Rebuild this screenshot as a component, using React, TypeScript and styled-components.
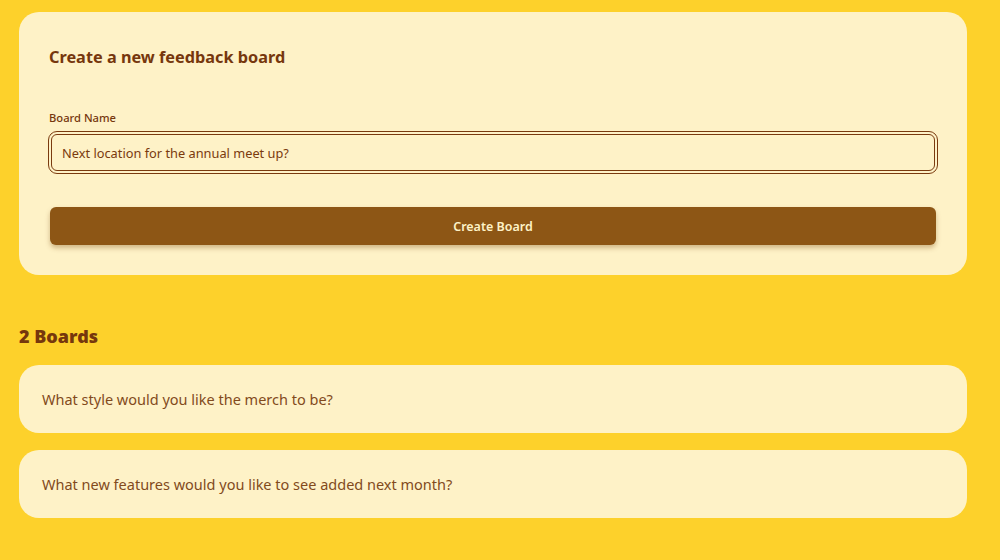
import React, { useState } from 'react'
import styled, { createGlobalStyle } from 'styled-components'

const GlobalStyle = createGlobalStyle`
  body {
    margin: 0;
    background: #FDD12B;
    font-family: "Noto Sans", "Open Sans", sans-serif;
    color: #7A3A0E;
  }
`

const Page = styled.div`
  width: 948px;
  padding: 12px 0 40px 19px;
`

const CreateCard = styled.form`
  background: #FEF2C7;
  border-radius: 20px;
  padding: 30px;
  display: flex;
  flex-direction: column;
`

const Title = styled.h2`
  margin: 0;
  font-size: 16.3px;
  line-height: 30px;
  font-weight: 700;
  color: #76370D;
`

const Label = styled.label`
  margin-top: 38px;
  font-size: 11.2px;
  line-height: 16px;
  font-weight: 500;
  color: #76370D;
`

const Input = styled.input`
  margin-top: 5px;
  margin-left: -1px;
  height: 43px;
  width: 890px;
  box-sizing: border-box;
  border: 4px double #7A3A0E;
  border-radius: 9px;
  background: #FEF2C7;
  padding: 0 10px;
  font-family: inherit;
  font-size: 12.8px;
  color: #7A3A0E;
  outline: none;
`

const Button = styled.button`
  margin-top: 33px;
  margin-left: 1px;
  width: 886px;
  height: 38px;
  border: none;
  border-radius: 6px;
  background: #8D5615;
  color: #FEF2C7;
  font-family: inherit;
  font-size: 12.5px;
  font-weight: 600;
  box-shadow: 0 3px 5px rgba(120, 70, 10, 0.35);
  cursor: pointer;
`

const SectionTitle = styled.h3`
  margin: 48px 0 16px;
  font-size: 18px;
  line-height: 26px;
  font-weight: 900;
  color: #76370D;
`

const BoardList = styled.div`
  display: flex;
  flex-direction: column;
  gap: 17px;
`

const BoardCard = styled.div`
  background: #FEF2C7;
  border-radius: 20px;
  height: 68px;
  padding: 0 23px;
  display: flex;
  align-items: center;
  font-size: 14.5px;
  color: #824A1C;
`

const boards = [
  'What style would you like the merch to be?',
  'What new features would you like to see added next month?',
]

export default function App() {
  const [name, setName] = useState('Next location for the annual meet up?')

  return (
    <>
      <GlobalStyle />
      <Page>
        <CreateCard onSubmit={(e) => e.preventDefault()}>
          <Title>Create a new feedback board</Title>
          <Label htmlFor="board-name">Board Name</Label>
          <Input id="board-name" value={name} onChange={(e) => setName(e.target.value)} />
          <Button type="submit">Create Board</Button>
        </CreateCard>
        <SectionTitle>{boards.length} Boards</SectionTitle>
        <BoardList>
          {boards.map((b) => (
            <BoardCard key={b}>{b}</BoardCard>
          ))}
        </BoardList>
      </Page>
    </>
  )
}
